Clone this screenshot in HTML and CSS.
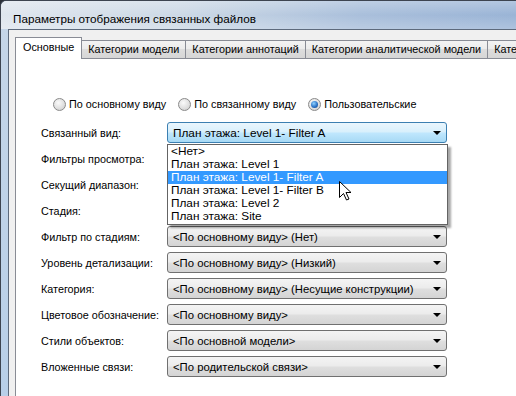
FILE: index.html
```
<!DOCTYPE html>
<html>

<head>
    <meta charset='utf-8'>
    <title>Параметры отображения связанных файлов</title>
    <link rel="stylesheet" href="styles.css">
</head>

<body>
    <div class="window">
        <div class="titlebar">Параметры отображения связанных файлов</div>
        <div class="client">
            <div class="tabs">
                <div class="tab active">Основные</div>
                <div class="tab">Категории модели</div>
                <div class="tab">Категории аннотаций</div>
                <div class="tab">Категории аналитической модели</div>
                <div class="tab">Категории импорта</div>
            </div>
            <div class="panel">
                <div class="radios">
                    <label class="radio"><span class="dot"></span>По основному виду</label>
                    <label class="radio"><span class="dot"></span>По связанному виду</label>
                    <label class="radio checked"><span class="dot"></span>Пользовательские</label>
                </div>

                <div class="form">
                    <div class="label">Связанный вид:</div>
                    <div class="combo-wrap">
                        <div class="combo open">План этажа: Level 1- Filter A<span class="arrow"></span></div>
                        <ul class="dropdown">
                            <li>&lt;Нет&gt;</li>
                            <li>План этажа: Level 1</li>
                            <li class="selected">План этажа: Level 1- Filter A</li>
                            <li>План этажа: Level 1- Filter B</li>
                            <li>План этажа: Level 2</li>
                            <li>План этажа: Site</li>
                        </ul>
                    </div>

                    <!-- these three are covered by the open list -->
                    <div class="label">Фильтры просмотра:</div>
                    <div class="combo"><span class="arrow"></span></div>

                    <div class="label">Секущий диапазон:</div>
                    <div class="combo"><span class="arrow"></span></div>

                    <div class="label">Стадия:</div>
                    <div class="combo"><span class="arrow"></span></div>

                    <div class="label">Фильтр по стадиям:</div>
                    <div class="combo">&lt;По основному виду&gt; (Нет)<span class="arrow"></span></div>

                    <div class="label">Уровень детализации:</div>
                    <div class="combo">&lt;По основному виду&gt; (Низкий)<span class="arrow"></span></div>

                    <div class="label">Категория:</div>
                    <div class="combo">&lt;По основному виду&gt; (Несущие конструкции)<span class="arrow"></span></div>

                    <div class="label">Цветовое обозначение:</div>
                    <div class="combo">&lt;По основному виду&gt;<span class="arrow"></span></div>

                    <div class="label">Стили объектов:</div>
                    <div class="combo">&lt;По основной модели&gt;<span class="arrow"></span></div>

                    <div class="label">Вложенные связи:</div>
                    <div class="combo">&lt;По родительской связи&gt;<span class="arrow"></span></div>
                </div>

                <!-- mouse pointer over the open list -->
                <svg class="cursor" width="13" height="20" viewBox="0 0 13 20">
                    <path d="M0.5 0.5 L0.5 16.5 L4.5 12.5 L7.5 19 L10 18 L7 11.5 L12 11.5 Z" fill="#fff" stroke="#000" stroke-width="1" stroke-linejoin="miter"/>
                </svg>
            </div>
        </div>
    </div>
</body>

</html>
```

FILE: styles.css
```
body,
html {
    margin: 0;
    padding: 0;
    width: 516px;
    height: 396px;
    overflow: hidden;
    background: #2b3038;
}

.window {
    width: 516px;
    height: 396px;
    overflow: hidden;
    padding-left: 7px;
    box-sizing: border-box;
    border-top-left-radius: 6px;
    border-top: 1px solid #3d4450;
    border-left: 1px solid #3d4450;
    background: linear-gradient(180deg, #c6d6e8 0%, #b8cfe8 100%);
    font-family: "Liberation Sans", Arial, sans-serif;
    font-size: 10.8px;
    color: #000;
}

.titlebar {
    height: 28px;
    margin-left: -7px;
    padding-left: 12px;
    line-height: 36px;
    font-size: 11.7px;
    color: #000;
    border-top-left-radius: 5px;
    background:
        linear-gradient(180deg, rgba(255, 255, 255, 0.25) 0%, rgba(255, 255, 255, 0) 50%, rgba(255, 255, 255, 0.2) 100%),
        linear-gradient(90deg, #dfe6ee 0%, #cdd9e6 35%, #a9bfdb 70%, #9ab4d6 100%);
    box-sizing: border-box;
}

.client {
    width: 600px;
    border-top: 1px solid #5d6a7c;
    border-left: 1px solid #5d6a7c;
    background: #f0f0f0;
    padding: 7px 0 0 6px;
    height: 400px;
}

/* tab strip */
.tabs {
    display: flex;
    align-items: flex-end;
    height: 21px;
    position: relative;
    z-index: 2;
}

.tab {
    height: 18px;
    line-height: 17px;
    padding: 0 6px;
    box-sizing: border-box;
    border: 1px solid #898c95;
    border-bottom: none;
    margin-left: -1px;
    background: linear-gradient(180deg, #f3f3f3 0%, #ebebeb 50%, #dddddd 50%, #d6d6d6 100%);
    white-space: nowrap;
}

.tab.active {
    height: 22px;
    line-height: 19px;
    padding: 0 7px;
    margin-left: 0;
    margin-right: -1px;
    margin-bottom: -1px;
    background: #fff;
    position: relative;
    z-index: 3;
}

.tab.active+.tab {
    margin-left: 0;
}

/* page of the tab */
.panel {
    position: relative;
    border: 1px solid #898c95;
    background: #fff;
    height: 360px;
    padding: 38px 0 0 25px;
    box-sizing: border-box;
}

.radios {
    display: flex;
    gap: 12px;
    padding-left: 12px;
    height: 14px;
    align-items: center;
}

.radio {
    display: flex;
    align-items: center;
    gap: 3px;
}

.dot {
    width: 11px;
    height: 11px;
    border-radius: 50%;
    border: 1px solid #8a8a8a;
    background: radial-gradient(circle at 40% 35%, #fafafa 0%, #e0e0e0 55%, #c8c8c8 100%);
    display: inline-block;
    position: relative;
}

.radio.checked .dot::after {
    content: "";
    position: absolute;
    left: 2px;
    top: 2px;
    width: 7px;
    height: 7px;
    border-radius: 50%;
    background: radial-gradient(circle at 40% 35%, #8fd2ff 0%, #2d74c8 55%, #0b3b7a 100%);
}

.form {
    display: grid;
    grid-template-columns: 126px 280px;
    grid-auto-rows: 21px;
    row-gap: 5px;
    margin-top: 11px;
    align-items: center;
}

.label {
    white-space: nowrap;
}

.combo-wrap {
    position: relative;
    height: 21px;
    z-index: 2;
}

.combo {
    height: 21px;
    box-sizing: border-box;
    border: 1px solid #707070;
    border-radius: 3px;
    padding-left: 5px;
    display: flex;
    align-items: center;
    justify-content: space-between;
    white-space: nowrap;
    font-size: 11.3px;
    background: linear-gradient(180deg, #f4f4f4 0%, #ececec 45%, #dedede 55%, #d4d4d4 100%);
}

.combo.open {
    font-size: 11.8px;
    border-color: #3c7fb1;
    background: linear-gradient(180deg, #eaf6fd 0%, #d9f0fc 45%, #bee6fd 55%, #a7d9f5 100%);
}

.arrow {
    width: 0;
    height: 0;
    margin-left: auto;
    border-left: 4px solid transparent;
    border-right: 4px solid transparent;
    border-top: 4px solid #000;
    margin-right: 5px;
}

.dropdown {
    position: absolute;
    top: 22px;
    left: 0;
    width: 279px;
    margin: 0;
    padding: 0 0 1px 0;
    list-style: none;
    background: #fff;
    border: 1px solid #646464;
    box-shadow: 3px 3px 2px rgba(0, 0, 0, 0.35);
    font-size: 11.8px;
}

.dropdown li {
    height: 13px;
    line-height: 13px;
    padding-left: 3px;
    white-space: nowrap;
}

.dropdown li.selected {
    background: #3399ff;
    color: #fff;
}

.cursor {
    position: absolute;
    left: 323px;
    top: 122px;
    z-index: 5;
}
```
